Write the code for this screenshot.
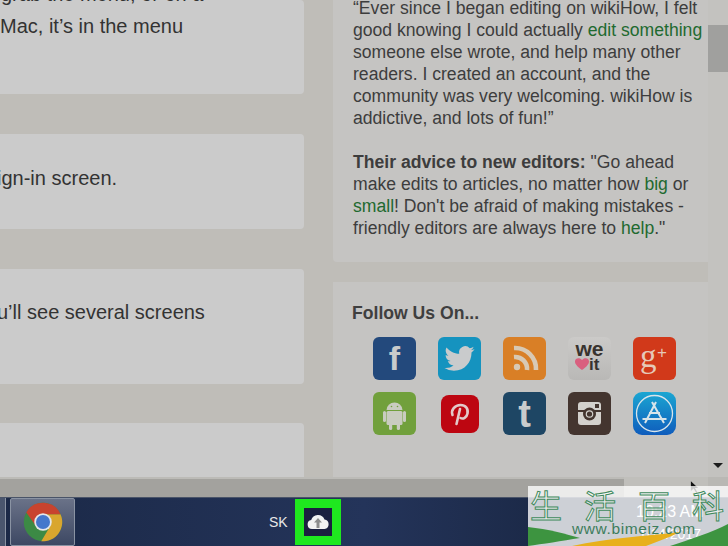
<script>
	// social icons live in the sidebar, two rows of five
</script>

<div class="screen">
	<div class="viewport">
		<div class="content">
			<div class="steps">
				<div class="step step-a">
					<p class="cut-top">grab the menu, or on a</p>
					<p>Mac, it’s in the menu</p>
				</div>
				<div class="step step-b">
					<p class="shift-b">ign-in screen.</p>
				</div>
				<div class="step step-c">
					<p class="shift-c">u’ll see several screens</p>
				</div>
				<div class="step step-d"></div>
			</div>

			<aside class="sidebar">
				<div class="panel quote">
					<p>“Ever since I began editing on wikiHow, I felt good knowing I could actually <a href="#e">edit something</a> someone else wrote, and help many other readers. I created an account, and the community was very welcoming. wikiHow is addictive, and lots of fun!”</p>
					<p class="advice"><b>Their advice to new editors:</b> "Go ahead make edits to articles, no matter how <a href="#b">big</a> or <a href="#s">small</a>! Don't be afraid of making mistakes - friendly editors are always here to <a href="#h">help</a>."</p>
				</div>

				<div class="panel follow">
					<h3>Follow Us On...</h3>
					<div class="icons">
						<div class="icon fb">
							<svg viewBox="0 0 43 43"><text x="21.5" y="33" text-anchor="middle" class="fb-f">f</text></svg>
						</div>
						<div class="icon tw">
							<svg viewBox="0 0 24 24"><g transform="translate(3.6 3.6) scale(0.7)"><path fill="#c9cbcc" d="M23.953 4.57a10 10 0 01-2.825.775 4.958 4.958 0 002.163-2.723c-.951.555-2.005.959-3.127 1.184a4.92 4.92 0 00-8.384 4.482C7.69 8.095 4.067 6.13 1.64 3.162a4.822 4.822 0 00-.666 2.475c0 1.71.87 3.213 2.188 4.096a4.904 4.904 0 01-2.228-.616v.06a4.923 4.923 0 003.946 4.827 4.996 4.996 0 01-2.212.085 4.936 4.936 0 004.604 3.417 9.867 9.867 0 01-6.102 2.105c-.39 0-.779-.023-1.17-.067a13.995 13.995 0 007.557 2.209c9.053 0 13.998-7.496 13.998-13.985 0-.21 0-.42-.015-.63A9.935 9.935 0 0024 4.59z"/></g></svg>
						</div>
						<div class="icon rss">
							<svg viewBox="0 0 43 43">
								<circle cx="14" cy="30" r="3.2" fill="#d8c9b4"/>
								<path d="M11 20a12 12 0 0 1 13 13" fill="none" stroke="#d8c9b4" stroke-width="4.6"/>
								<path d="M11 11a21 21 0 0 1 22 22" fill="none" stroke="#d8c9b4" stroke-width="4.6"/>
							</svg>
						</div>
						<div class="icon weit">
							<svg viewBox="0 0 43 43">
								<text x="21.5" y="19" text-anchor="middle" class="we">we</text>
								<path d="M14 33c-5-3.6-7-6-7-8.5 0-3.4 4.8-4.4 7-1.2 2.2-3.2 7-2.2 7 1.2 0 2.5-2 4.9-7 8.5z" fill="#d9607f"/>
								<text x="21" y="33" class="it">it</text>
							</svg>
						</div>
						<div class="icon gp">
							<svg viewBox="0 0 43 43">
								<text x="7" y="30" class="gp-g">g</text>
								<text x="24" y="21" class="gp-p">+</text>
							</svg>
						</div>
						<div class="icon an">
							<svg viewBox="0 0 43 43" fill="#c9ccc0">
								<path d="M13.5 18a8 7.5 0 0 1 16 0z"/>
								<rect x="13.5" y="19" width="16" height="14" rx="1.5"/>
								<rect x="10" y="19" width="3" height="11" rx="1.5"/>
								<rect x="30" y="19" width="3" height="11" rx="1.5"/>
								<rect x="16" y="31" width="3.2" height="7" rx="1.6"/>
								<rect x="23.8" y="31" width="3.2" height="7" rx="1.6"/>
								<circle cx="18.5" cy="14.5" r="0.8" fill="#71a03c"/>
								<circle cx="24.5" cy="14.5" r="0.8" fill="#71a03c"/>
							</svg>
						</div>
						<div class="icon pin">
							<svg viewBox="0 0 38 38" fill="none" stroke="#e3c9c9" stroke-width="2.6" stroke-linecap="round">
								<path d="M11.5 20c-2-5 2.500-10 8-10 5 0 8 3.500 7 8.500-.8 4-4.500 6-7 4.500"/>
								<path d="M19 14l-3.500 15"/>
							</svg>
						</div>
						<div class="icon tu">
							<svg viewBox="0 0 43 43"><text x="21.5" y="35" text-anchor="middle" class="tu-t">t</text></svg>
						</div>
						<div class="icon ig">
							<svg viewBox="0 0 43 43">
								<rect x="10" y="10" width="23" height="23" rx="3" fill="#d3d0cc"/>
								<rect x="10" y="18" width="23" height="2" fill="#44352f"/>
								<circle cx="21.500" cy="22" r="6.500" fill="#44352f"/>
								<circle cx="21.500" cy="22" r="3.800" fill="#d3d0cc"/>
								<circle cx="21.500" cy="22" r="2.600" fill="#44352f"/>
								<rect x="27" y="12" width="4" height="4" fill="#44352f"/>
							</svg>
						</div>
						<div class="icon as">
							<svg viewBox="0 0 43 43" fill="none" stroke="#d8e4ea">
								<circle cx="21.500" cy="21.500" r="18" stroke-width="1.300"/>
								<path d="M23 10L12 31M19 10l12 21M9.500 27H33.500M16 21h11" stroke-width="2"/>
							</svg>
						</div>
					</div>
				</div>
			</aside>
		</div>

		<div class="vscroll">
			<div class="vthumb"></div>
			<div class="arrow-down"></div>
		</div>
	</div>

	<div class="hscroll">
		<div class="hthumb"></div>
		<div class="htrack"></div>
	</div>

	<div class="taskbar">
		<div class="prev-task"></div>
		<div class="task-btn">
			<svg viewBox="0 0 48 48" width="42" height="42">
				<circle cx="24" cy="24" r="22" fill="#3c8a45"/>
				<path d="M24 15H44A22 22 0 0 1 22 46L32 29z" fill="#d9a62e"/>
				<path d="M24 15H44A22 22 0 0 0 4.900 13L15.500 28z" fill="#c8432f"/>
				<circle cx="24" cy="24" r="10" fill="#e4e6ea"/>
				<circle cx="24" cy="24" r="8" fill="#4477cc"/>
			</svg>
		</div>
		<div class="tray">
			<span class="lang">SK</span>
			<div class="highlight">
				<svg viewBox="0 0 24 18" width="24" height="18">
					<path d="M6 16a4.500 4.500 0 0 1-.8-8.900A7 7 0 0 1 18.500 6.500 4.800 4.800 0 0 1 18.500 16z" fill="#f2f2f2"/>
					<path d="M12 5l-4 4.500h2.500V15h3V9.500H16z" fill="#8d8d8d"/>
				</svg>
			</div>
			<div class="clock">
				<span>10:23 AM</span>
				<span class="date">1/14/2017</span>
			</div>
		</div>
	</div>

	<svg class="pointer" viewBox="0 0 10 14" width="9" height="13"><path d="M1 0v11l3-3 3 5 1-1-2.500-4.500H9z" fill="#111"/></svg>

	<div class="watermark">
		<svg class="swoosh" viewBox="0 0 200 60" preserveAspectRatio="none">
			<path d="M0 41C20 43 38 48 52 52 34 55 14 58 0 60z" fill="#3d9440"/>
			<path d="M44 60C80 52 120 50 152 46 140 52 128 56 118 60z" fill="#e8b01c"/>
			<path d="M142 60C160 54 185 46 200 38V60z" fill="#3d9440"/>
		</svg>
		<div class="wm-title"><span>生</span><span>活</span><span>百</span><span>科</span></div>
		<div class="wm-url">www.bimeiz.com</div>
	</div>
</div>

<style>
	:global(body) {
		margin: 0;
		background: #bfbdb8;
	}

	.screen {
		position: relative;
		width: 728px;
		height: 546px;
		display: flex;
		flex-direction: column;
		overflow: hidden;
		font-family: 'Liberation Sans', Arial, sans-serif;
	}

	.viewport {
		height: 477px;
		display: flex;
		background: #bfbdb8;
	}

	.content {
		flex: 1;
		display: grid;
		grid-template-columns: 304px 375px;
		column-gap: 29px;
		overflow: hidden;
	}

	.steps {
		display: flex;
		flex-direction: column;
		gap: 40px;
		overflow: hidden;
	}

	.step {
		background: #cbcbcb;
		border-radius: 0 4px 4px 0;
		flex-shrink: 0;
		font-size: 20px;
		line-height: 32px;
		color: #333;
		overflow: hidden;
	}

	.step p {
		margin: 0;
		white-space: nowrap;
	}

	.step-a {
		height: 94px;
		padding-top: 0;
	}

	.cut-top {
		margin-top: -22px !important;
		margin-left: 1px !important;
	}

	.step-b {
		height: 95px;
		padding-top: 28px;
		box-sizing: border-box;
	}

	.step-c {
		height: 115px;
		padding-top: 27px;
		box-sizing: border-box;
	}

	.step-d {
		height: 80px;
		margin-top: -1px;
	}

	.shift-b {
		margin-left: -3px !important;
	}

	.shift-c {
		margin-left: -3px !important;
	}

	.sidebar {
		display: flex;
		flex-direction: column;
		gap: 20px;
		overflow: hidden;
	}

	.panel {
		background: #c5c4c2;
		border-radius: 0 0 0 4px;
		flex-shrink: 0;
		box-sizing: border-box;
		padding: 0 0 0 20px;
		color: #3d3d3d;
	}

	.quote {
		height: 262px;
		font-size: 17.6px;
		line-height: 22px;
		overflow: hidden;
	}

	.quote p {
		margin: -3px 0 0;
		width: 356px;
	}

	.quote .advice {
		margin-top: 22px;
	}

	.quote a {
		color: #1f6a30;
		text-decoration: none;
	}

	.follow {
		height: 200px;
		padding: 20px 0 0 19px;
	}

	.follow h3 {
		margin: 0;
		font-size: 17.6px;
		line-height: 22px;
		font-weight: 700;
		color: #3f3f3f;
	}

	.icons {
		margin: 13px 0 0 21px;
		display: grid;
		grid-template-columns: repeat(5, 43px);
		grid-auto-rows: 43px;
		column-gap: 22px;
		row-gap: 12px;
		place-items: center;
	}

	.icon {
		width: 43px;
		height: 43px;
		border-radius: 6px;
		overflow: hidden;
	}

	.icon svg {
		display: block;
		width: 100%;
		height: 100%;
	}

	.fb { background: #23497c; }
	.tw { background: #1593bf; }
	.rss { background: #d97f26; }
	.weit { background: linear-gradient(#cbcac8, #b9b8b6); }
	.gp { background: #d1391a; }
	.an { background: #71a03c; }
	.pin {
		width: 38px;
		height: 38px;
		background: #bd0611;
		border-radius: 8px;
	}
	.tu { background: #1e4664; }
	.ig { background: #44352f; }
	.as { background: linear-gradient(#1ba6d2, #0f5cbc); border-radius: 9px; }

	.fb-f {
		font: 700 34px 'Liberation Sans', sans-serif;
		fill: #c9cbcc;
	}

	.tu-t {
		font: 700 38px 'Liberation Sans', sans-serif;
		fill: #c9cccd;
	}

	.gp-g {
		font: 400 33px 'Liberation Serif', serif;
		fill: #e6c8b8;
	}

	.gp-p {
		font: 400 17px 'Liberation Sans', sans-serif;
		fill: #e6c8b8;
	}

	.we {
		font: 700 21px 'Liberation Sans', sans-serif;
		fill: #38332f;
	}

	.it {
		font: 700 17px 'Liberation Sans', sans-serif;
		fill: #38332f;
	}

	.vscroll {
		width: 20px;
		background: #c3c2bf;
		position: relative;
	}

	.vthumb {
		height: 47px;
		margin-top: 25px;
		background: #a0a09e;
	}

	.arrow-down {
		position: absolute;
		left: 5px;
		bottom: 9px;
		border-left: 5px solid transparent;
		border-right: 5px solid transparent;
		border-top: 5px solid #1c1c1c;
	}

	.hscroll {
		height: 20px;
		display: flex;
		background: #b9b8b4;
	}

	.hthumb {
		width: 624px;
		background: #a3a29e;
		border-top: 2px solid #bcbbb7;
		box-sizing: border-box;
	}

	.htrack {
		width: 84px;
		background: #c0bfbb;
	}

	.taskbar {
		flex: 1;
		display: flex;
		align-items: stretch;
		gap: 4px;
		background: linear-gradient(90deg, #1b2947 0%, #24345a 50%, #1b2947 75%);
		border-top: 1px solid #4a5468;
		color: #e8e8e8;
	}

	.prev-task {
		width: 5px;
		background: #4a566e;
		border-right: 1px solid #8a93a3;
	}

	.task-btn {
		width: 65px;
		display: flex;
		align-items: center;
		justify-content: center;
		background: linear-gradient(#6a7288, #3d4863);
		border: 1px solid #8a93a3;
		border-radius: 2px;
		box-sizing: border-box;
	}

	.tray {
		flex: 1;
		display: flex;
		align-items: center;
		padding-left: 190px;
	}

	.lang {
		font-size: 14px;
		width: 26px;
	}

	.highlight {
		width: 28px;
		height: 28px;
		border: 9px solid #1fe81f;
		background: #1b2040;
		display: flex;
		align-items: center;
		justify-content: center;
	}

	.clock {
		margin-left: 295px;
		display: flex;
		flex-direction: column;
		align-items: center;
		font-size: 16px;
		gap: 5px;
		color: #fff;
	}

	.date {
		font-size: 14px;
	}

	.pointer {
		position: absolute;
		left: 690px;
		top: 481px;
	}

	.watermark {
		position: absolute;
		left: 528px;
		top: 486px;
		width: 200px;
		height: 60px;
		background: rgba(255, 255, 255, 0.78);
		overflow: hidden;
	}

	.swoosh {
		position: absolute;
		inset: 0;
		width: 100%;
		height: 100%;
	}

	.wm-title {
		position: relative;
		display: flex;
		gap: 22px;
		padding-left: 2px;
		font-family: 'Noto Sans CJK SC', sans-serif;
		font-size: 32px;
		line-height: 36px;
		color: rgba(255, 255, 255, 0.6);
		-webkit-text-stroke: 1px #3f8a5c;
	}

	.wm-url {
		position: relative;
		margin-top: -2px;
		padding-left: 44px;
		font-size: 15.5px;
		line-height: 18px;
		letter-spacing: 0.6px;
		color: #3e7d5c;
	}
</style>
